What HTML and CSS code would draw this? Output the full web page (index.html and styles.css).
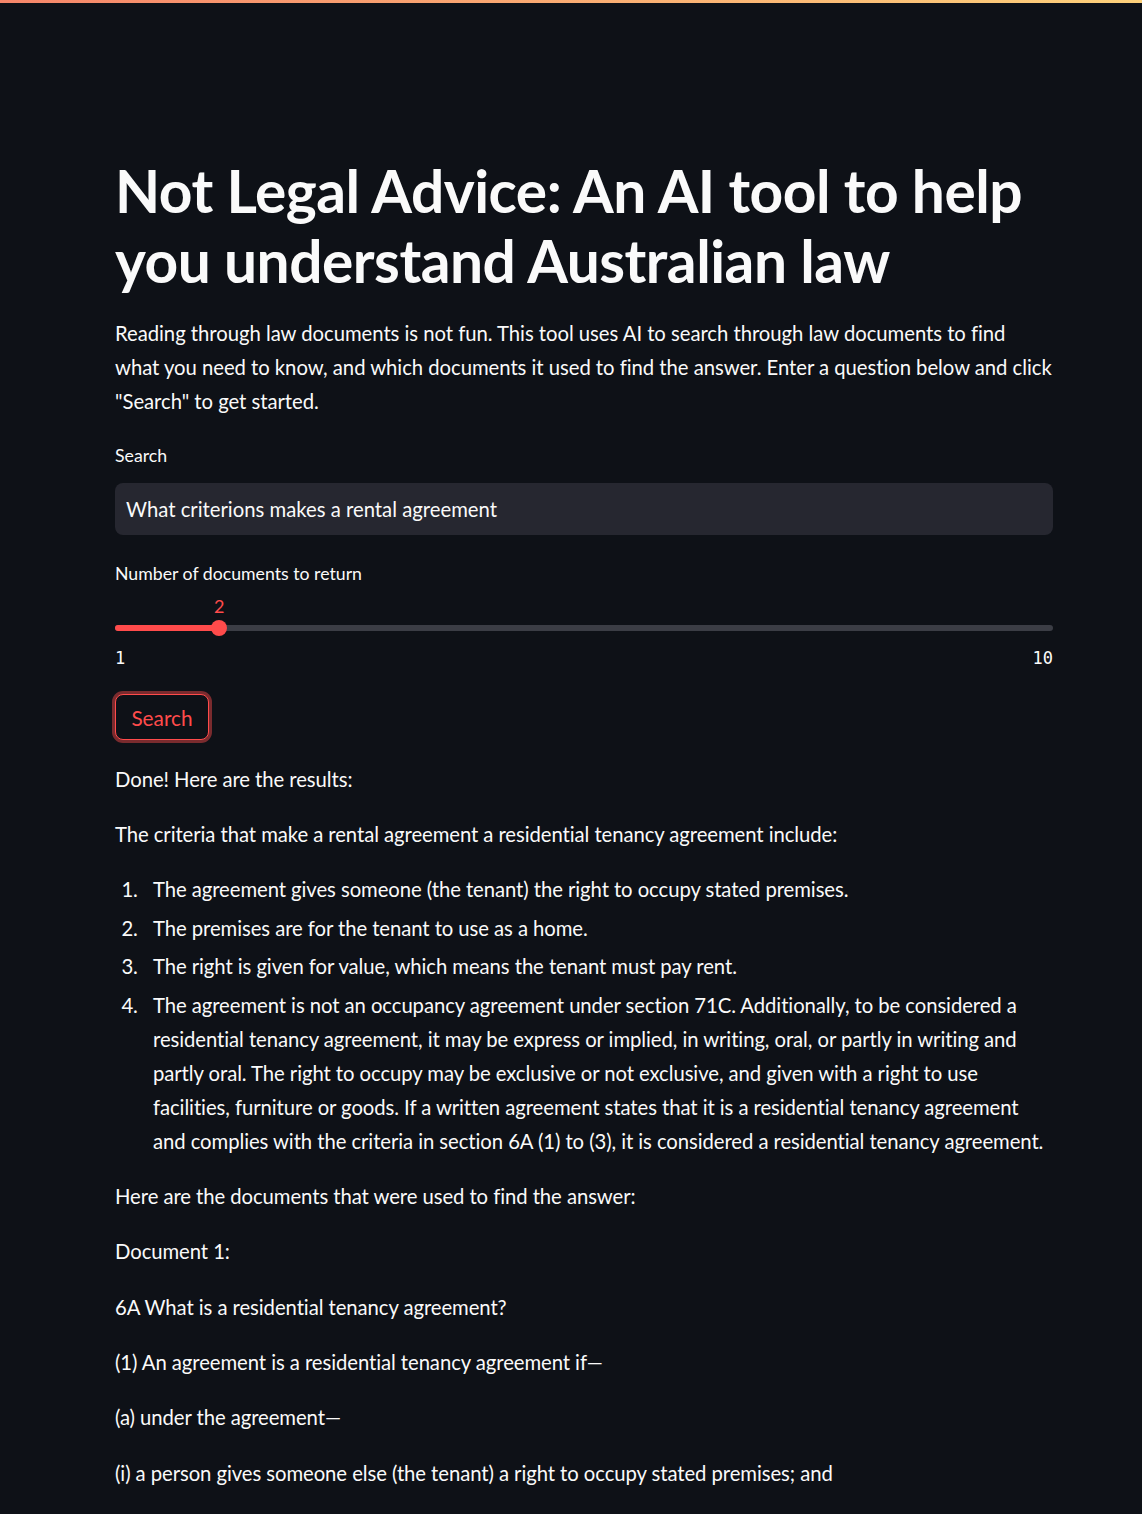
FILE: index.html
```html
<!DOCTYPE html>
<html lang="en">
<head>
<meta charset="utf-8">
<title>Not Legal Advice</title>
<link rel="stylesheet" href="styles.css">
</head>
<body>
<div class="decoration"></div>
<main class="block">
  <h1 class="title">Not Legal Advice: An AI tool to help you understand Australian law</h1>
  <p class="md intro">Reading through law documents is not fun. This tool uses AI to search through law documents to find what you need to know, and which documents it used to find the answer. Enter a question below and click "Search" to get started.</p>

  <div class="field">
    <label class="label">Search</label>
    <div class="input">What criterions makes a rental agreement</div>
  </div>

  <div class="field field-slider">
    <label class="label">Number of documents to return</label>
    <div class="slider">
      <div class="slider-value-row"><span class="slider-value" style="left: 11.111%">2</span></div>
      <div class="slider-track">
        <div class="slider-fill" style="width: 11.111%"></div>
        <div class="slider-thumb" style="left: 11.111%"></div>
      </div>
      <div class="slider-ticks"><span>1</span><span>10</span></div>
    </div>
  </div>

  <div class="btn-row"><button class="btn">Search</button></div>

  <p class="md">Done! Here are the results:</p>
  <p class="md">The criteria that make a rental agreement a residential tenancy agreement include:</p>
  <ol class="md-list">
    <li>The agreement gives someone (the tenant) the right to occupy stated premises.</li>
    <li>The premises are for the tenant to use as a home.</li>
    <li>The right is given for value, which means the tenant must pay rent.</li>
    <li>The agreement is not an occupancy agreement under section 71C. Additionally, to be considered a residential tenancy agreement, it may be express or implied, in writing, oral, or partly in writing and partly oral. The right to occupy may be exclusive or not exclusive, and given with a right to use facilities, furniture or goods. If a written agreement states that it is a residential tenancy agreement and complies with the criteria in section 6A (1) to (3), it is considered a residential tenancy agreement.</li>
  </ol>
  <p class="md">Here are the documents that were used to find the answer:</p>
  <p class="md">Document 1:</p>
  <p class="md">6A What is a residential tenancy agreement?</p>
  <p class="md">(1) An agreement is a residential tenancy agreement if—</p>
  <p class="md">(a) under the agreement—</p>
  <p class="md">(i) a person gives someone else (the tenant) a right to occupy stated premises; and</p>
</main>
</body>
</html>
```
FILE: styles.css
```css
html, body {
  margin: 0;
  padding: 0;
  background: #0e1117;
  color: #fafafa;
  font-family: Lato, "Noto Sans", sans-serif;
  height: 1514px;
  overflow: hidden;
}
.decoration {
  height: 3px;
  background: linear-gradient(90deg, #f6866a, #fdd17b);
}
.block {
  width: 938px;
  margin-left: 115px;
  padding-top: 152px;
  display: flex;
  flex-direction: column;
  gap: 21.33px;
}
.title {
  margin: 0;
  font-size: 58.67px;
  line-height: 70px;
  font-weight: 700;
  letter-spacing: -0.5px;
}
.md {
  margin: 0;
  font-size: 20.3px;
  line-height: 34px;
  letter-spacing: -0.07px;
}
.md.intro {
  letter-spacing: -0.04px;
}
.field {
  display: flex;
  flex-direction: column;
  padding-top: 1px;
}
.field-slider {
  padding-top: 3px;
}
.label {
  font-size: 17.7px;
  line-height: 30px;
  margin-bottom: 12px;
}
.input {
  height: 52px;
  box-sizing: border-box;
  background: #262730;
  border-radius: 8px;
  padding-left: 11px;
  font-size: 20.3px;
  line-height: 52px;
}
.slider {
  display: flex;
  flex-direction: column;
  margin-top: -12px;
}
.slider-value-row {
  position: relative;
  height: 30px;
  margin-top: 2px;
}
.slider-value {
  position: absolute;
  top: 0;
  transform: translateX(-50%);
  color: #ff4b4b;
  font-size: 18px;
  line-height: 30px;
}
.slider-track {
  position: relative;
  height: 6px;
  margin-top: 4px;
  background: #3b3d45;
  border-radius: 3px;
}
.slider-fill {
  height: 100%;
  background: #ff4b4b;
  border-radius: 3px;
}
.slider-thumb {
  position: absolute;
  top: 50%;
  width: 16px;
  height: 16px;
  border-radius: 50%;
  background: #ff4b4b;
  transform: translate(-50%, -50%);
}
.slider-ticks {
  display: flex;
  justify-content: space-between;
  margin-top: 12px;
  font-family: "DejaVu Sans Mono", monospace;
  font-size: 17px;
  line-height: 30px;
}
.btn-row {
  display: flex;
}
.btn {
  height: 46px;
  width: 94px;
  box-sizing: border-box;
  background: #0e1117;
  border: 1px solid #ff4b4b;
  border-radius: 8px;
  color: #ff4b4b;
  font-family: Lato, "Noto Sans", sans-serif;
  font-size: 20.8px;
  box-shadow: 0 0 0 3px rgba(255, 75, 75, 0.45);
  padding: 0;
}
.md-list {
  margin: 0;
  padding-left: 38px;
  font-size: 20.3px;
  line-height: 34px;
  letter-spacing: -0.07px;
}
.md-list li {
  margin-top: 4.5px;
}
.md-list li::marker {
  content: counter(list-item) ". \2002";
}
.md-list li:first-child {
  margin-top: 0;
}
```
